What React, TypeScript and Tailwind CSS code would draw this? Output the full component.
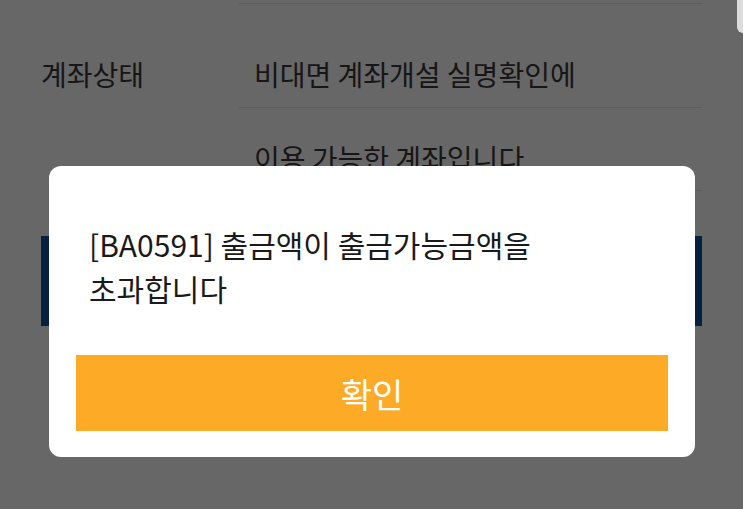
import React from "react";

const font = { fontFamily: '"Noto Sans CJK KR", "Noto Sans", sans-serif' };

const AccountRow: React.FC = () => (
 <div className="flex px-[41px]">
  <div className="w-[198px] shrink-0 pt-[52px] text-[28px] leading-[36px] text-[#161616]">
   계좌상태
  </div>
  <div className="flex-1">
   <div className="border-b border-[#5d5d5d] pl-[15px] pt-[52px] pb-[15px] text-[28px] leading-[36px] text-[#161616]">
    비대면 계좌개설 실명확인에
   </div>
   <div className="border-b border-[#5d5d5d] pl-[15px] pt-[32px] pb-[14px] text-[28px] leading-[36px] text-[#161616]">
    이용 가능한 계좌입니다
   </div>
  </div>
 </div>
);

const AlertModal: React.FC = () => (
 <div className="absolute left-[49px] top-[166px] w-[646px] rounded-[12px] bg-white px-[27px] pt-[56px] pb-[26px]">
  <p className="px-[13px] text-[30px] leading-[44px] text-[#1a1a1a]">
   [BA0591] 출금액이 출금가능금액을
   <br />
   초과합니다
  </p>
  <button
   type="button"
   className="mt-[45px] flex h-[76px] w-full items-center justify-center bg-[#fdaa27] text-[34px] text-white"
  >
   확인
  </button>
 </div>
);

const App: React.FC = () => {
 return (
  <div
   className="relative h-[509px] w-[743px] overflow-hidden bg-[#676767]"
   style={font}
  >
   <div className="ml-[239px] mr-[40px] h-[4px] border-b border-[#5d5d5d]" />
   <AccountRow />
   <div className="mx-[41px] mt-[45px] h-[90px] bg-[#04213f]" />
   <div className="absolute right-0 top-0 h-[33px] w-[6px] rounded-bl-[6px] bg-[#dcdcdc]" />
   <AlertModal />
  </div>
 );
};

export default App;
